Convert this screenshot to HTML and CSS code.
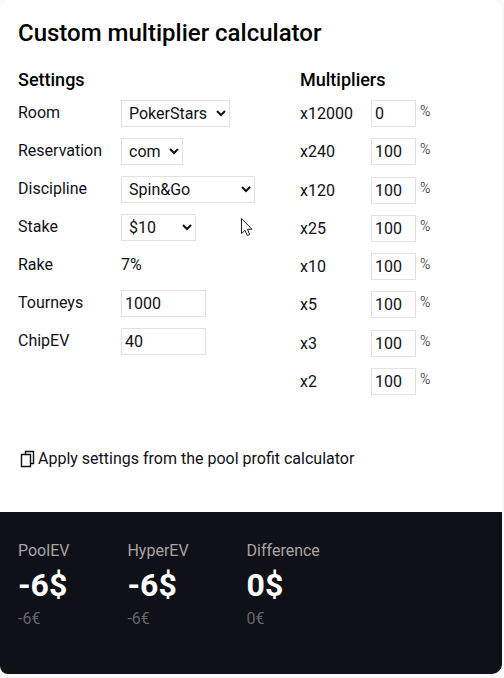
FILE: index.html
```html
<!DOCTYPE html>
<html lang="en">
<head>
<meta charset="utf-8">
<meta name="viewport" content="width=device-width, initial-scale=1">
<title>Custom multiplier calculator</title>
<link rel="stylesheet" href="styles.css">
</head>
<body>
<main class="card">
  <form class="form">
    <h1 class="title">Custom multiplier calculator</h1>
    <div class="columns">
      <section class="settings">
        <h2 class="heading">Settings</h2>
        <div class="rows">
          <div class="row"><label class="label" for="room">Room</label><select class="field select room" id="room"><option>PokerStars</option></select></div>
          <div class="row"><label class="label" for="reservation">Reservation</label><select class="field select reservation" id="reservation"><option>com</option></select></div>
          <div class="row"><label class="label" for="discipline">Discipline</label><select class="field select discipline" id="discipline"><option>Spin&amp;Go</option></select></div>
          <div class="row"><label class="label" for="stake">Stake</label><select class="field select stake" id="stake"><option>$10</option></select></div>
          <div class="row"><span class="label">Rake</span><span class="label">7%</span></div>
          <div class="row"><label class="label" for="tourneys">Tourneys</label><input class="field number" id="tourneys" type="text" value="1000"></div>
          <div class="row"><label class="label" for="chipev">ChipEV</label><input class="field number" id="chipev" type="text" value="40"></div>
        </div>
      </section>
      <section class="multipliers">
        <h2 class="heading">Multipliers</h2>
        <div class="rows">
          <div class="row"><label class="name" for="m12000">x12000</label><input class="field" id="m12000" type="text" value="0"><span class="unit">%</span></div>
          <div class="row"><label class="name" for="m240">x240</label><input class="field" id="m240" type="text" value="100"><span class="unit">%</span></div>
          <div class="row"><label class="name" for="m120">x120</label><input class="field" id="m120" type="text" value="100"><span class="unit">%</span></div>
          <div class="row"><label class="name" for="m25">x25</label><input class="field" id="m25" type="text" value="100"><span class="unit">%</span></div>
          <div class="row"><label class="name" for="m10">x10</label><input class="field" id="m10" type="text" value="100"><span class="unit">%</span></div>
          <div class="row"><label class="name" for="m5">x5</label><input class="field" id="m5" type="text" value="100"><span class="unit">%</span></div>
          <div class="row"><label class="name" for="m3">x3</label><input class="field" id="m3" type="text" value="100"><span class="unit">%</span></div>
          <div class="row"><label class="name" for="m2">x2</label><input class="field" id="m2" type="text" value="100"><span class="unit">%</span></div>
        </div>
      </section>
    </div>
    <button class="apply" type="button">
      <svg class="copy" viewBox="0 0 16 18" aria-hidden="true"><path d="M5.5 4V1.5h8v12H11M1.5 4.5h9v12h-9z"/></svg>
      <span>Apply settings from the pool profit calculator</span>
    </button>
  </form>
  <section class="results">
    <div class="result"><span class="caption">PoolEV</span><strong class="amount">-6$</strong><span class="euro">-6€</span></div>
    <div class="result"><span class="caption">HyperEV</span><strong class="amount">-6$</strong><span class="euro">-6€</span></div>
    <div class="result"><span class="caption">Difference</span><strong class="amount">0$</strong><span class="euro">0€</span></div>
  </section>
</main>
<svg class="pointer" viewBox="0 0 13 20" aria-hidden="true"><path d="M1.5 1.5v15l3.5-3.2 2.2 5.2 2.5-1-2.2-5.2h4.5z"/></svg>
</body>
</html>
```

FILE: styles.css
```css
* {
  box-sizing: border-box;
}

body {
  margin: 0;
  padding: 0 2px 4px 0;
  background: #f9f9f9;
  color: #101018;
  font: 400 16px/24px Roboto, sans-serif;
}

.card {
  overflow: hidden;
  border-radius: 10px 10px 10px 8px;
  background: #fff;
}

.form {
  padding: 17px 18px 41px;
}

.title,
.heading {
  margin: 0;
  color: #000;
  font-weight: 500;
}

.title {
  font-size: 24px;
  line-height: 32px;
}

.heading {
  font-size: 18px;
  line-height: 24px;
}

.columns {
  display: grid;
  grid-template-columns: 282px 1fr;
  align-items: start;
  margin-top: 19px;
}

.rows {
  display: grid;
  grid-template-rows: repeat(8, 1fr);
  min-height: 304px;
  margin-top: 8px;
}

.multipliers .rows {
  min-height: 306px;
}

.row {
  display: grid;
  grid-template-columns: 103px 1fr;
  align-items: start;
  justify-items: start;
}

.multipliers .row {
  grid-template-columns: 71px 45px 1fr;
}

.label {
  line-height: 26px;
}

.name {
  line-height: 28px;
}

.field {
  width: 100%;
  height: 27px;
  margin: 0;
  padding: 0 3px;
  border: 1px solid #e2e2e2;
  border-radius: 0;
  background: #fff;
  color: #101018;
  font: inherit;
}

.room {
  width: 109px;
}

.reservation {
  width: 62px;
}

.discipline {
  width: 134px;
}

.stake {
  width: 75px;
}

.number {
  width: 85px;
}

.unit {
  padding-left: 4px;
  font-size: 14px;
  font-weight: 300;
  line-height: 22px;
}

.apply {
  display: flex;
  align-items: center;
  gap: 2px;
  margin-top: 41px;
  padding: 0 0 0 2px;
  border: 0;
  background: none;
  color: inherit;
  font: inherit;
}

.copy {
  width: 16px;
  height: 18px;
  fill: none;
  stroke: #111;
  stroke-width: 1.4;
}

.results {
  display: flex;
  padding: 27px 18px 43px;
  background: #101118;
}

.result {
  display: flex;
  flex-direction: column;
  margin-right: 58px;
}

.caption {
  color: #a9a4a5;
}

.amount {
  color: #fff;
  font-size: 32px;
  font-weight: 700;
  line-height: 44px;
}

.euro {
  color: #666;
}

.pointer {
  position: absolute;
  top: 217px;
  left: 240px;
  width: 13px;
  height: 20px;
  fill: #fff;
  stroke: #223;
}
```
